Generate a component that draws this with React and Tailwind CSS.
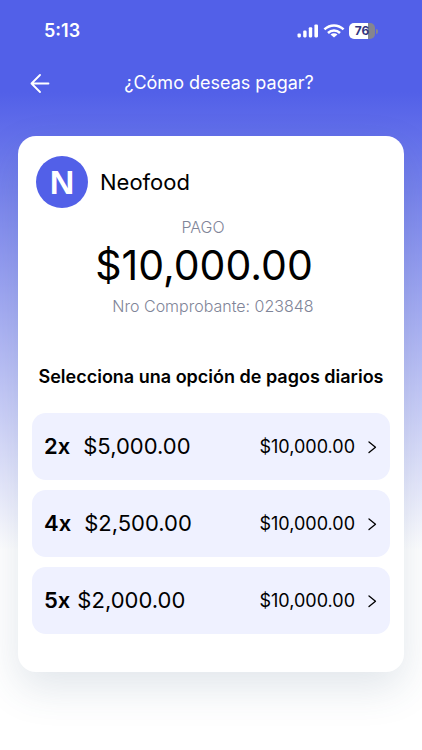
import React from "react";

const options = [
  { count: "2x", amount: "$5,000.00", total: "$10,000.00", gap: "gap-[13px]" },
  { count: "4x", amount: "$2,500.00", total: "$10,000.00", gap: "gap-[13px]" },
  { count: "5x", amount: "$2,000.00", total: "$10,000.00", gap: "gap-[7px]" },
];

function SignalIcon() {
  return (
    <svg width="22" height="14" viewBox="0 0 22 14" fill="currentColor" aria-hidden="true">
      <rect x="0.5" y="9.4" width="3.4" height="4" rx="1.1" />
      <rect x="6.2" y="6.6" width="3.4" height="6.8" rx="1.1" />
      <rect x="11.8" y="3.2" width="3.4" height="10.2" rx="1.1" />
      <rect x="17.4" y="0.4" width="3.6" height="13" rx="1.1" />
    </svg>
  );
}

function WifiIcon() {
  return (
    <svg width="22" height="14" viewBox="0 0 22 14" fill="none" stroke="currentColor" strokeWidth="2.5" aria-hidden="true">
      <path d="M1.4 5.4C7 .2 15 .2 20.6 5.4" />
      <path d="M5 9c3.4-3.3 8.6-3.3 12 0" />
      <path d="M11 13.6 7.5 10.6c2-1.8 5-1.8 7 0Z" fill="currentColor" stroke="none" />
    </svg>
  );
}

function Battery() {
  return (
    <div className="flex items-center gap-px">
      <div className="flex h-4 w-[26px] items-center justify-center rounded-[5px] bg-linear-to-r from-white from-74% to-[#85858f] to-74% text-xs leading-4 font-bold text-[#33357f]">
        76
      </div>
      <div className="h-[5px] w-[2px] rounded-r-full bg-[#85858f]" />
    </div>
  );
}

export default function App() {
  return (
    <div className="flex min-h-screen flex-col bg-white bg-linear-to-b/srgb from-[#5260e8] from-[92px] to-white to-[550px] pb-[78px] font-['Inter','Liberation_Sans',sans-serif] text-black">
      <div className="flex h-[62px] items-center justify-between pr-11 pl-11 text-white">
        <span className="text-lg font-semibold">5:13</span>
        <div className="flex items-center gap-1">
          <SignalIcon />
          <WifiIcon />
          <Battery />
        </div>
      </div>

      <header className="grid h-[42px] grid-cols-[40px_1fr_40px] items-center px-5 text-white">
        <button type="button" aria-label="Volver" className="flex h-10 items-center justify-center">
          <svg width="20" height="20" viewBox="0 0 20 20" fill="none" stroke="currentColor" strokeWidth="1.8" strokeLinecap="round" strokeLinejoin="round" aria-hidden="true">
            <path d="M18.5 10.5h-17M10 2 1.5 10.5 10 19" />
          </svg>
        </button>
        <h1 className="pl-4 text-center text-lg">¿Cómo deseas pagar?</h1>
      </header>

      <main className="mx-[18px] mt-8 flex grow flex-col rounded-[18px] bg-white px-[14px] pt-5 pb-[38px] shadow-[0_16px_40px_#33597a26]">
        <div className="flex items-center gap-3 pl-1">
          <div className="flex size-[52px] items-center justify-center rounded-full bg-[#5260e8] font-['Liberation_Sans',sans-serif] text-[34px] font-bold text-white">
            N
          </div>
          <span className="text-[22px]">Neofood</span>
        </div>

        <section className="flex flex-col items-center pt-2">
          <p className="pr-4 text-base leading-[22px] font-light text-[#7f8598]">PAGO</p>
          <p className="pr-3.5 text-[41px] leading-[54px]">$10,000.00</p>
          <p className="pt-0.5 pl-1 text-base font-light text-[#7f8598]">Nro Comprobante: 023848</p>
        </section>

        <h2 className="pt-[45px] text-center text-lg font-semibold">Selecciona una opción de pagos diarios</h2>

        <ul className="flex flex-col gap-2.5 pt-[22px]">
          {options.map((o) => (
            <li key={o.count}>
              <button type="button" className="flex h-[67px] w-full items-center justify-between rounded-[14px] bg-[#eff1ff] pr-[11px] pl-3">
                <span className={`flex items-center text-[22px] ${o.gap}`}>
                  <span className="font-semibold">{o.count}</span>
                  <span>{o.amount}</span>
                </span>
                <span className="flex items-center gap-3 text-lg">
                  {o.total}
                  <svg width="12" height="14" viewBox="0 0 12 14" fill="none" stroke="currentColor" strokeWidth="1.3" strokeLinecap="round" strokeLinejoin="round" aria-hidden="true">
                    <path d="m2 2 6.5 5.2L2 12.5" />
                  </svg>
                </span>
              </button>
            </li>
          ))}
        </ul>
      </main>
    </div>
  );
}
